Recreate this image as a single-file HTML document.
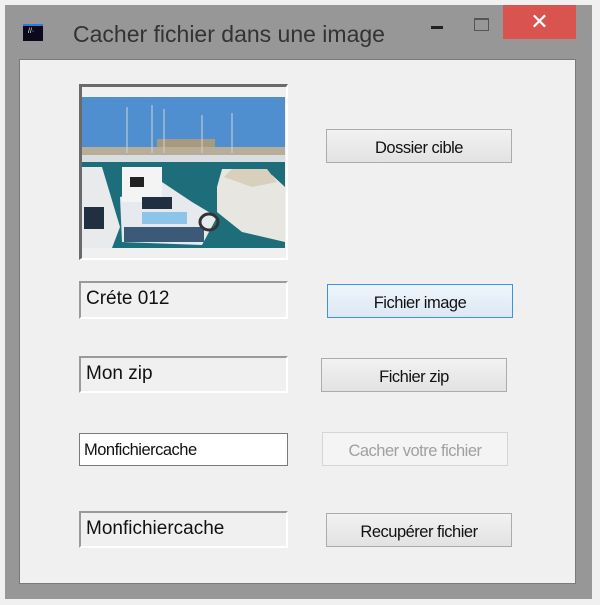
<!DOCTYPE html>
<html><head><meta charset="utf-8"><style>
body{margin:0;width:600px;height:605px;background:#f0f0f0;position:relative;overflow:hidden;font-family:"Liberation Sans",sans-serif}
.frame{position:absolute;left:5px;top:5px;width:587px;height:594px;background:#979797}
.client{position:absolute;left:19px;top:59px;width:557px;height:525px;background:#f0f0f0;border:1px solid #7a7a7a;box-sizing:border-box}
.title{position:absolute;left:73px;top:21px;font-size:23px;color:#333}
.close{position:absolute;left:503px;top:5px;width:73px;height:34px;background:#d9534f;color:#fff;font-size:22px;text-align:center;line-height:34px}
.lbl{position:absolute;left:79px;width:209px;box-sizing:border-box;border-top:2px solid #9a9a9a;border-left:2px solid #9a9a9a;border-right:2px solid #fff;border-bottom:2px solid #fff;font-size:19px;color:#111;padding:5px 0 0 5px}
.btn{position:absolute;width:186px;height:34px;box-sizing:border-box;border:1px solid #acacac;background:linear-gradient(#f2f2f2,#e2e2e2);font-size:16.5px;color:#111;text-align:center;line-height:36px;letter-spacing:-0.5px}
</style></head><body>
<div class="frame"></div>
<div style="position:absolute;left:23px;top:24px;width:20px;height:15px;background:#0a0a1a;border-top:2px solid #2b7be0"></div>
<div style="position:absolute;left:28px;top:28px;font-size:7px;color:#fff">//·</div>
<div class="title">Cacher fichier dans une image</div>
<div style="position:absolute;left:431px;top:26px;width:12px;height:3px;background:#222"></div>
<div style="position:absolute;left:474px;top:18px;width:13px;height:10px;border:1px solid #555;border-top-width:2px"></div>
<div class="close">✕</div>
<div class="client"></div>
<div style="position:absolute;left:79px;top:84px;width:209px;height:176px;box-sizing:border-box;border-top:3px solid #6a6a6a;border-left:3px solid #6a6a6a;border-right:2px solid #fff;border-bottom:2px solid #fff;background:#f0f0f0"></div>
<svg style="position:absolute;left:82px;top:97px" width="203" height="151" viewBox="0 0 203 151">
<rect width="203" height="151" fill="#4f8fd0"/>
<rect x="75" y="42" width="58" height="18" fill="#a89a7e"/>
<rect x="0" y="50" width="203" height="12" fill="#b8ad98"/>
<rect x="0" y="60" width="203" height="91" fill="#1d6e7a"/>
<rect x="0" y="58" width="203" height="7" fill="#d8dde0"/>
<g stroke="#cfd3d6" stroke-width="1"><line x1="45" y1="10" x2="45" y2="56"/><line x1="70" y1="8" x2="70" y2="56"/><line x1="82" y1="12" x2="82" y2="56"/><line x1="120" y1="18" x2="120" y2="56"/><line x1="150" y1="16" x2="150" y2="56"/></g>
<path d="M38 100 L40 145 L120 148 L135 120 L110 105 L80 85 L60 95 Z" fill="#e6eaee"/>
<rect x="40" y="70" width="40" height="35" fill="#f4f4f4"/>
<rect x="48" y="80" width="14" height="10" fill="#222"/>
<rect x="60" y="100" width="30" height="12" fill="#203040"/>
<rect x="60" y="115" width="45" height="12" fill="#8fc4ea"/>
<rect x="42" y="130" width="80" height="15" fill="#3a5a78"/>
<path d="M135 90 L140 72 L160 72 L190 78 L203 90 L203 145 L160 135 L135 115 Z" fill="#e8e6e0"/>
<path d="M142 80 L150 72 L185 72 L195 85 L170 90 Z" fill="#d8d0bc"/>
<path d="M0 70 L20 70 L38 130 L30 151 L0 151 Z" fill="#e8eaec"/>
<rect x="2" y="110" width="20" height="22" fill="#203040"/>
<ellipse cx="127" cy="125" rx="9" ry="8" fill="none" stroke="#333" stroke-width="3"/>
</svg>
<div class="btn" style="left:326px;top:129px">Dossier cible</div>
<div class="lbl" style="top:281px;height:38px">Créte 012</div>
<div class="btn" style="left:327px;top:284px;border-color:#3c94e0;background:linear-gradient(#eef5fc,#dde8f4)">Fichier image</div>
<div class="lbl" style="top:356px;height:37px">Mon zip</div>
<div class="btn" style="left:321px;top:358px">Fichier zip</div>
<div style="position:absolute;left:79px;top:433px;width:209px;height:33px;box-sizing:border-box;border:1px solid #7a7a7a;background:#fff;font-size:16.5px;padding:7px 0 0 4px;letter-spacing:-0.5px;color:#111">Monfichiercache</div>
<div class="btn" style="left:322px;top:432px;color:#a0a0a0;background:#f4f4f4;border-color:#d5d5d5">Cacher votre fichier</div>
<div class="lbl" style="top:511px;height:37px">Monfichiercache</div>
<div class="btn" style="left:326px;top:513px">Recupérer fichier</div>
</body></html>
